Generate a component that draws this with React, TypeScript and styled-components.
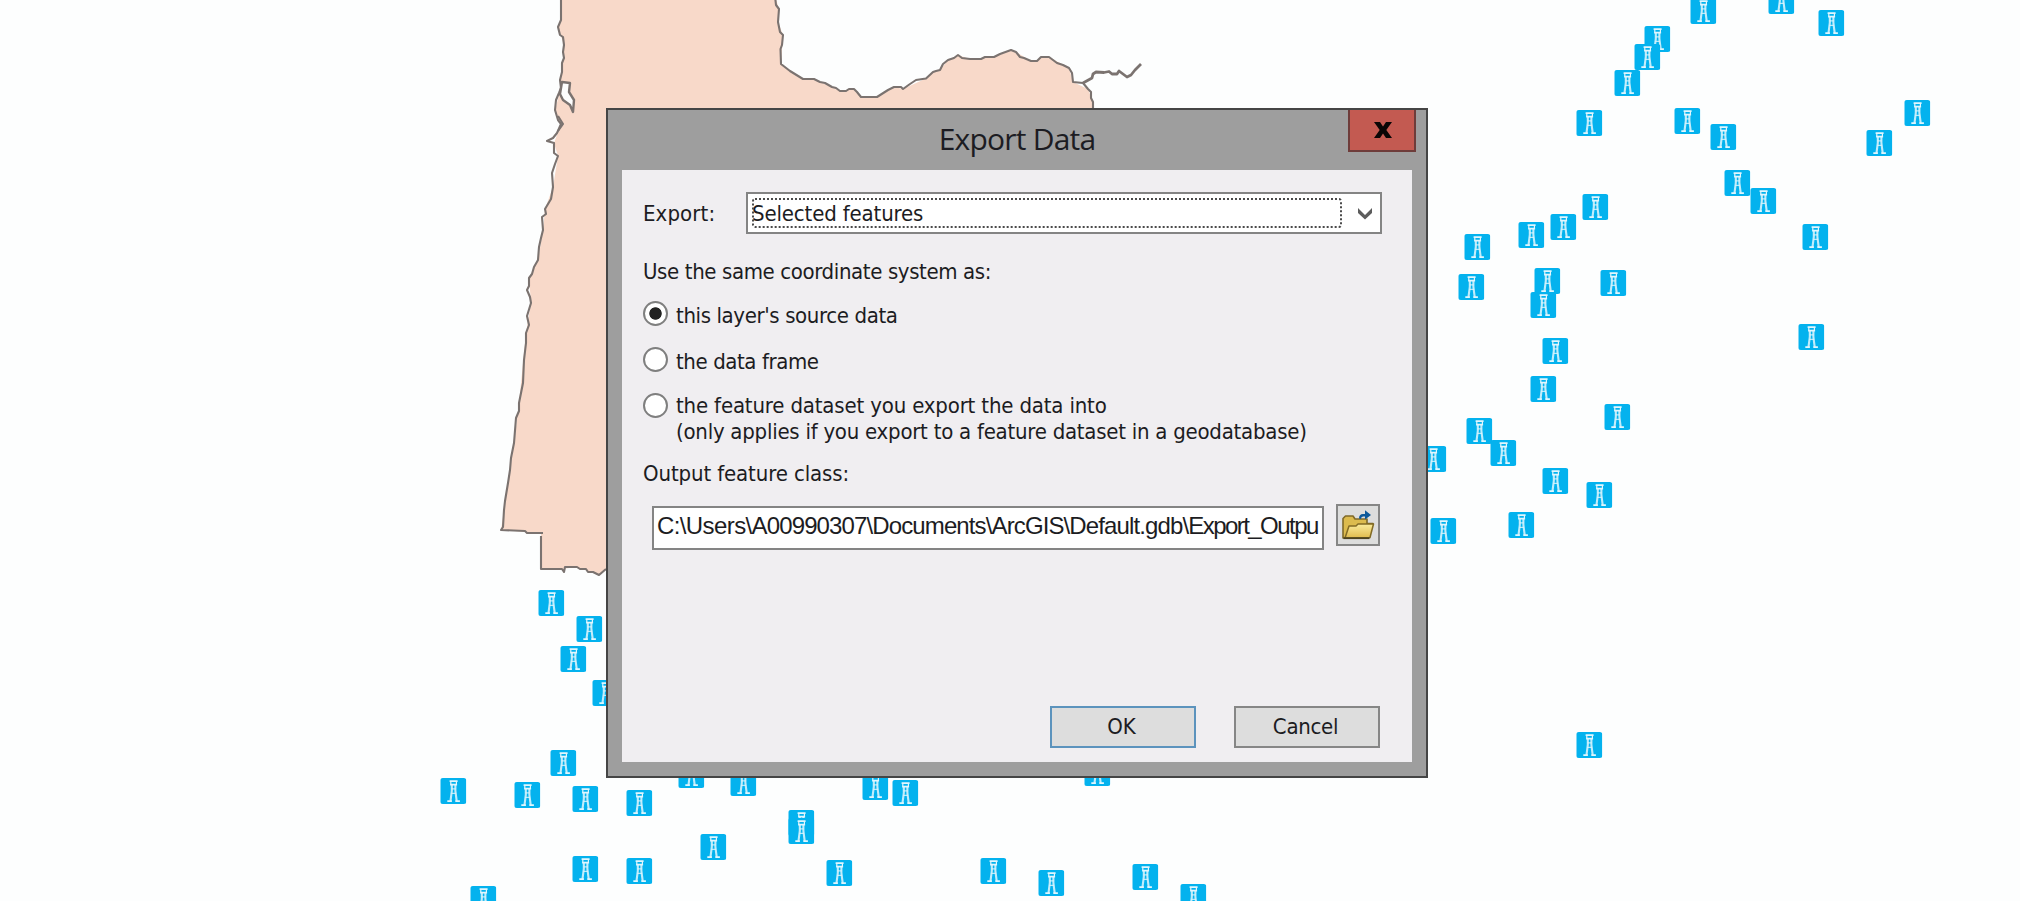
import React, { useState } from 'react';
import styled, { createGlobalStyle } from 'styled-components';

const GlobalStyle = createGlobalStyle`
  *, *::before, *::after { box-sizing: border-box; }
  body { margin: 0; background: #fdfefe; overflow: hidden; }
`;

const uiFont = "'DejaVu Sans Condensed', 'DejaVu Sans', sans-serif";

const Desktop = styled.main`
  position: relative;
  width: 2020px;
  height: 901px;
  overflow: hidden;
  background: #fdfefe;
`;

const MapCanvas = styled.svg`
  display: block;
  width: 2020px;
  height: 901px;
`;

const Dialog = styled.section`
  position: absolute;
  left: 606px;
  top: 108px;
  width: 822px;
  height: 670px;
  display: flex;
  flex-direction: column;
  padding: 0 14px 14px;
  border: 2px solid #454545;
  background: #9e9e9e;
  color: #1c1c22;
  font: 22px/26px ${uiFont};
`;

const TitleBar = styled.header`
  display: grid;
  grid-template-columns: 68px 1fr 68px;
  height: 60px;
  flex: none;
  margin-right: -4px;
`;

const Title = styled.h1`
  grid-column: 2;
  margin: 0 0 0 -4px;
  font: 400 30px/58px 'Open Sans', 'Noto Sans', sans-serif;
  letter-spacing: -0.78px;
  text-align: center;
  white-space: nowrap;
`;

const CloseButton = styled.button`
  display: flex;
  align-items: center;
  justify-content: center;
  width: 68px;
  height: 42px;
  padding: 0 0 0 1px;
  border: 2px solid #6e3c3a;
  border-top: 0;
  background: #c35a51;
`;

const Client = styled.div`
  display: flex;
  flex-direction: column;
  flex: 1;
  padding: 22px 32px 14px 20px;
  background: #f0eef1;
`;

const Text = styled.span<{ $spacing?: number }>`
  letter-spacing: ${(p) => p.$spacing ?? 0}px;
  white-space: nowrap;
`;

const ExportRow = styled.div`
  display: flex;
  align-items: center;
  justify-content: space-between;
  height: 42px;
  margin-right: -2px;
`;

const ExportLabel = styled.label`
  padding: 2px 0 0 1px;
`;

const Select = styled.div`
  display: flex;
  align-items: center;
  width: 636px;
  height: 42px;
  padding: 4px;
  border: 2px solid #848484;
  background: #fff;
`;

const FocusedValue = styled.div`
  position: relative;
  display: flex;
  align-items: center;
  width: 590px;
  height: 30px;
  padding-top: 2px;
`;

const FocusRing = styled.svg`
  position: absolute;
  inset: 0;
`;

const Chevron = styled.svg`
  margin-left: 15px;
`;

const Prompt = styled.div`
  margin: 25px 0 0 1px;
  height: 26px;
`;

const RadioGroup = styled.div`
  display: flex;
  flex-direction: column;
  gap: 18px;
  margin-top: 15px;
`;

const RadioRow = styled.label<{ $lines: number }>`
  display: flex;
  align-items: flex-start;
  gap: 8px;
  height: ${(p) => (p.$lines > 1 ? 54 : 28)}px;
`;

const RadioMark = styled.span<{ $checked: boolean }>`
  flex: none;
  width: 25px;
  height: 25px;
  margin: 1px 0 0 1px;
  border: 2px solid #7f7f7f;
  border-radius: 50%;
  background: ${(p) =>
    p.$checked ? 'radial-gradient(circle, #222 0 5.8px, #fff 6.6px)' : '#fff'};
`;

const RadioLabel = styled.span<{ $lines: number }>`
  display: flex;
  flex-direction: column;
  padding-top: ${(p) => (p.$lines > 1 ? 1 : 3)}px;
`;

const OutputLabel = styled.div`
  margin: 15px 0 0 1px;
  height: 26px;
`;

const OutputRow = styled.div`
  display: flex;
  gap: 12px;
  margin-top: 17px;
  padding-left: 10px;
`;

const PathField = styled.div`
  width: 672px;
  height: 44px;
  margin-top: 2px;
  padding: 0 3px;
  border: 2px solid #848484;
  background: #fff;
  font: 24px/36px 'Liberation Sans', Arial, sans-serif;
  white-space: nowrap;
`;

const Button = styled.button<{ $default?: boolean }>`
  display: flex;
  align-items: center;
  justify-content: center;
  width: 146px;
  height: 42px;
  padding: 0 3px 0 0;
  border: 2px solid ${(p) => (p.$default ? '#5c93bd' : '#868686')};
  background: #dddddd;
  color: inherit;
  font: inherit;
`;

const BrowseButton = styled(Button)`
  width: 44px;
  padding: 0;
`;

const Actions = styled.footer`
  display: flex;
  justify-content: flex-end;
  gap: 38px;
  margin-top: auto;
`;

const pins: [number, number][] = [
  [551, 603], [589, 629], [573, 659], [605, 693], [563, 763], [453, 791],
  [527, 795], [585, 799], [639, 803], [691, 775], [743, 783], [875, 787],
  [905, 793], [801, 823], [801, 831], [713, 847], [585, 869], [639, 871],
  [839, 873], [483, 899], [993, 871], [1051, 883], [1145, 877], [1193, 897],
  [1097, 773], [1589, 745], [1703, 11], [1781, 1], [1831, 23], [1657, 39],
  [1647, 57], [1627, 83], [1589, 123], [1687, 121], [1723, 137], [1737, 183],
  [1763, 201], [1917, 113], [1879, 143], [1595, 207], [1563, 227], [1531, 235],
  [1477, 247], [1815, 237], [1471, 287], [1547, 281], [1613, 283], [1543, 305],
  [1555, 351], [1543, 389], [1811, 337], [1617, 417], [1479, 431], [1503, 453],
  [1433, 459], [1555, 481], [1599, 495], [1521, 525], [1443, 531],
];

const westCoast =
  'M561 -4L561 20 558 27 560 35 563 37 564 45 563 52 564 58 562 63 562 72 560 80 561 88 559 93 556 100 555 110 558 120 561 124 557 133 553 138 547 141 554 143 554 153 558 156 555 164 552 173 553 187 551 199 545 209 546 214 542 217 543 230 541 238 539 247 538 260 534 267 532 274 529 278 529 286 527 290 530 297 531 303 527 316 529 325 526 333 526 343 524 360 523 383 519 403 519 411 516 418 514 443 511 458 510 470 508 483 505 501 504 510 503 527 501 530 525 531 527 533 543 533M541 536L541 569 562 569 564 572 565 567 577 567 580 569 586 569 588 572 593 572 599 575 606 569';

const eastCoast =
  'M775 -4L776 5 779 9 778 22 780 32 783 35 782 45 780.5 49 781 64 790 71 803 79 814 79 820 82 825 83 832 87 836 88 840 91 846 91 849 89 854 89 857 92 861 97 877 97 888 90 894 87 901 87 903 89 910 84 916 80 926 78.5 933 72 936 71 940 70 943 64 948 60 954 58 958 55 962 58 970 59 981 59 985 57 994 57 1000 54 1011 50 1016 52 1020 57 1024 58 1031 61 1037 61 1041 57 1049 57 1057 63 1063 65 1069 68 1072 73 1073 82 1083 83 1088 89 1091 92 1091 98 1093 102 1093 112';

const land =
  'M561 -4L561 20 558 27 564 45 562 72 560 80 561 88 555 110 561 124 554 143 558 156 553 187 545 209 543 230 538 260 529 278 531 303 526 333 519 403 514 443 504 510 501 530 541 533 541 569 562 569 577 567 599 575 606 569 1093 569 1093 102 1088 89 1073 82 1069 68 1049 57 1041 57 1037 61 1031 61 1016 52 1011 50 994 57 970 59 958 55 948 60 940 70 933 72 926 78.5 903 89 894 87 877 97 861 97 854 89 840 91 814 79 803 79 781 64 783 35 778 22 779 9 775 -4Z';

const MapLayer = () => (
  <MapCanvas viewBox="0 0 2020 901" aria-hidden="true">
    <defs>
      <symbol id="platform" viewBox="0 0 26 26" width="26" height="26">
        <rect width="26" height="26" rx="2.5" fill="#04b2ee" />
        <g fill="none" stroke="#e2f6fd">
          <path d="M9.300 3.200H17.300M9.800 6.600H16.800" strokeWidth="1.7" />
          <path d="M10.500 3.500V6.500M16.100 3.500V6.500" strokeWidth="1.200" />
          <path d="M11.500 7V13L10.200 23M15.100 7V13L16.400 23" strokeWidth="2.1" opacity="0.85" />
          <path d="M11.300 10.800H15.300M11 15.300H15.600" strokeWidth="1.300" opacity="0.8" />
          <path d="M7 23.200H11.600M15 23.200H19.600" strokeWidth="1.700" />
        </g>
      </symbol>
    </defs>
    <path d={land} fill="#f8d9c9" />
    <g fill="none" stroke="#7b7370" strokeWidth="2.1" strokeLinejoin="round">
      <path d={westCoast} />
      <path d={eastCoast} />
      <path d="M562 82L570 83 569 92 574 100 573 112 570 105 563 100 560 94Z" fill="#fdfefe" strokeWidth="2.4" />
      <path d="M558 116L563 124 558 131" />
      <path d="M1083 83L1092 78 1093 74 1096 72 1104 72.500 1109 71.500 1112 74 1117 74 1119 71 1127 77 1131 75 1135 70 1137 68 1141 64" strokeWidth="2.8" />
    </g>
    {pins.map(([x, y]) => (
      <use key={`${x}-${y}`} href="#platform" x={x - 12.7} y={y - 13} />
    ))}
  </MapCanvas>
);

const FolderIcon = () => (
  <svg width="34" height="32" viewBox="0 0 34 32" aria-hidden="true">
    <defs>
      <linearGradient id="front" x1="0" y1="0" x2="0" y2="1">
        <stop offset="0" stopColor="#fbec9c" />
        <stop offset="1" stopColor="#dfba4c" />
      </linearGradient>
    </defs>
    <path d="M2 29V9.500L4.500 7H12L14 10H26V14.500L32 14.500 27 28Z" fill="#dcbb4e" stroke="#7f6a2a" strokeWidth="1.6" strokeLinejoin="round" />
    <path d="M4 29L8 17H15L17 15H32.500L29 28.500Z" fill="url(#front)" stroke="#826b25" strokeWidth="1.5" strokeLinejoin="round" />
    <path d="M2.500 29.200H28.500" stroke="#4c431f" strokeWidth="1.8" />
    <path d="M18 9.500Q18 5 22 5H24V1.300L30 6 24 10.500V7.500H22Q20 7.500 20 10Z" fill="#0c589a" />
  </svg>
);

const options = [
  [{ text: "this layer's source data", spacing: -0.38 }],
  [{ text: 'the data frame', spacing: -0.41 }],
  [
    { text: 'the feature dataset you export the data into', spacing: -0.17 },
    { text: '(only applies if you export to a feature dataset in a geodatabase)', spacing: -0.25 },
  ],
];

export default function App() {
  const [selected, setSelected] = useState(0);
  return (
    <>
      <GlobalStyle />
      <Desktop>
        <MapLayer />
        <Dialog role="dialog" aria-label="Export Data">
          <TitleBar>
            <Title>Export Data</Title>
            <CloseButton aria-label="Close">
              <svg width="18" height="16" viewBox="0 0 18 16">
                <path d="M0 0H6L9 4.500 12 0H18L12.300 8 18 16H12L9 11.500 6 16H0L5.700 8Z" fill="#0a0606" />
              </svg>
            </CloseButton>
          </TitleBar>
          <Client>
            <ExportRow>
              <ExportLabel><Text $spacing={0.1}>Export:</Text></ExportLabel>
              <Select>
                <FocusedValue>
                  <FocusRing width="590" height="30">
                    <rect x="1" y="1" width="588" height="28" rx="2" fill="none" stroke="#4a4a4a" strokeWidth="2" strokeDasharray="2 2" />
                  </FocusRing>
                  <Text $spacing={-0.15}>Selected features</Text>
                </FocusedValue>
                <Chevron width="16" height="13" viewBox="0 0 16 13">
                  <path d="M1 1L8 8 15 1V6L8 12.500 1 6Z" fill="#5c5c5c" />
                </Chevron>
              </Select>
            </ExportRow>
            <Prompt><Text $spacing={-0.38}>Use the same coordinate system as:</Text></Prompt>
            <RadioGroup>
              {options.map((lines, i) => (
                <RadioRow key={i} $lines={lines.length} onClick={() => setSelected(i)}>
                  <RadioMark $checked={selected === i} />
                  <RadioLabel $lines={lines.length}>
                    {lines.map((line) => (
                      <Text key={line.text} $spacing={line.spacing}>{line.text}</Text>
                    ))}
                  </RadioLabel>
                </RadioRow>
              ))}
            </RadioGroup>
            <OutputLabel><Text $spacing={-0.12}>Output feature class:</Text></OutputLabel>
            <OutputRow>
              <PathField>
                <Text $spacing={-0.6}>{'C:\\Users\\'}</Text>
                <Text $spacing={-0.88}>{'A00990307\\Documents\\ArcGIS\\Default.gdb\\'}</Text>
                <Text $spacing={-1.55}>Export_Outpu</Text>
              </PathField>
              <BrowseButton aria-label="Browse"><FolderIcon /></BrowseButton>
            </OutputRow>
            <Actions>
              <Button $default><Text>OK</Text></Button>
              <Button><Text $spacing={-0.3}>Cancel</Text></Button>
            </Actions>
          </Client>
        </Dialog>
      </Desktop>
    </>
  );
}
